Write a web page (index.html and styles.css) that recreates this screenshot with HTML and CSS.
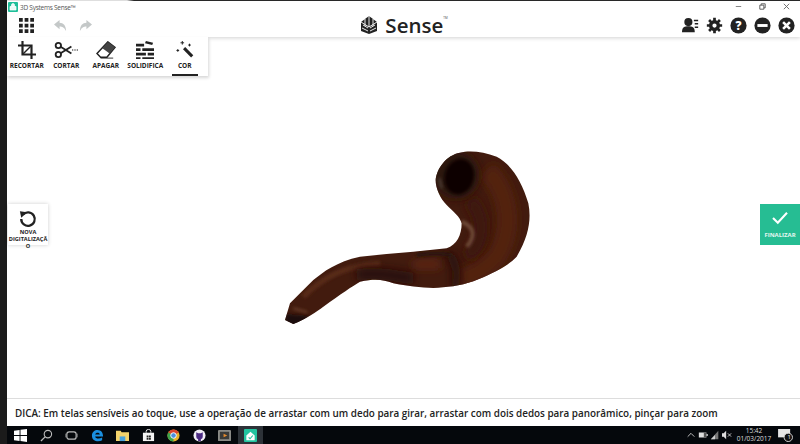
FILE: index.html
```html
<!DOCTYPE html>
<html lang="pt-BR">
<head>
    <meta charset="UTF-8">
    <meta name="viewport" content="width=device-width, initial-scale=1.0">
    <title>3D Systems Sense</title>
    <link rel="stylesheet" href="styles.css">
</head>
<body>
    <div class="desktop">
        <div class="topEdge"></div>
        <div class="window">
            <header class="header">
                <div class="titleBar">
                    <div class="appTitle">
                        <svg class="appIcon" viewBox="0 0 10 10"><rect width="10" height="10" rx="1" fill="#1fbf9a"/><path d="M2 4.500h6V8H2zM3.500 4.500V3a1.500 1.500 0 0 1 3 0v1.500" fill="#fff" stroke="#fff" stroke-width=".7" fill-opacity=".9"/></svg>
                        <span>3D Systems Sense™</span>
                    </div>
                    <div class="winControls">
                        <span class="winBtn">
                            <svg viewBox="0 0 10 10"><path d="M2 5h6" stroke="#777" stroke-width="1"/></svg>
                        </span>
                        <span class="winBtn">
                            <svg viewBox="0 0 10 10"><path d="M2 3.500h4.500V8H2zM3.500 3.500V2H8v4.500H6.500" fill="none" stroke="#555" stroke-width="1"/></svg>
                        </span>
                        <span class="winBtn">
                            <svg viewBox="0 0 10 10"><path d="M2 2l6 6M8 2l-6 6" stroke="#666" stroke-width="1"/></svg>
                        </span>
                    </div>
                </div>
                <div class="headerRow">
                    <div class="toolTop">
                        <svg class="gridIcon" viewBox="0 0 16 16">
                            <path d="M0 0h4v4H0zM6 0h4v4H6zM12 0h4v4h-4zM0 6h4v4H0zM6 6h4v4H6zM12 6h4v4h-4zM0 12h4v4H0zM6 12h4v4H6zM12 12h4v4h-4z" fill="#222"/>
                        </svg>
                        <svg class="undoIcon" viewBox="0 0 16 14"><path d="M7 1L1 6l6 5V8c3 0 5 1 7 5 0-6-3-9-7-9z" fill="#c4c8c8"/></svg>
                        <svg class="undoIcon" viewBox="0 0 16 14"><path d="M9 1l6 5-6 5V8c-3 0-5 1-7 5 0-6 3-9 7-9z" fill="#c4c8c8"/></svg>
                    </div>
                    <div class="brand">
                        <svg class="brandIcon" viewBox="0 0 20 20">
                            <path d="M10 1L18 7V16L10 19L2 16V7Z" fill="#222"/>
                            <path d="M10 1V12M2 7L10 12L18 7M4 10L9 13M16 10L11 13M3 13L9 16M17 13L11 16M6 4L6 11M14 4L14 11" stroke="#fff" stroke-width=".9" fill="none"/>
                        </svg>
                        <span class="brandName">Sense</span><span class="brandTm">TM</span>
                    </div>
                    <div class="headerIcons">
                        <svg class="headIcon" viewBox="0 0 20 20"><circle cx="7.500" cy="6" r="4.800" fill="#222"/><path d="M0 18c0-6 3-7 7.500-7s7.500 1 7.500 7z" fill="#222"/><path d="M14 4h5M15 8h4M15 12h4" stroke="#222" stroke-width="1.800"/></svg>
                        <svg class="headIcon" viewBox="0 0 20 20"><circle cx="10" cy="10" r="4.500" fill="none" stroke="#222" stroke-width="4"/><path d="M10 1v4M10 15v4M1 10h4M15 10h4M3.600 3.600l3 3M13.400 13.400l3 3M16.400 3.600l-3 3M6.600 13.400l-3 3" stroke="#222" stroke-width="3.200"/></svg>
                        <svg class="headIcon" viewBox="0 0 20 20"><circle cx="10" cy="10" r="9.500" fill="#222"/><text x="10" y="15" class="helpMark">?</text></svg>
                        <svg class="headIcon" viewBox="0 0 20 20"><circle cx="10" cy="10" r="9.500" fill="#222"/><rect x="4" y="8.300" width="12" height="3.400" fill="#fff"/></svg>
                        <svg class="headIcon" viewBox="0 0 20 20"><circle cx="10" cy="10" r="9.500" fill="#222"/><path d="M6 6l8 8M14 6l-8 8" stroke="#fff" stroke-width="3"/></svg>
                    </div>
                </div>
            </header>

            <main class="stage">
                <div class="toolPanel">
                    <div class="toolRow">
                        <div class="tool">
                            <svg class="toolIcon" viewBox="0 0 20 20"><path d="M5 0v15h15M0 5h15v15" fill="none" stroke="#222" stroke-width="2.400"/><path d="M5 15L15 5" stroke="#222" stroke-width="1.600"/></svg>
                            <span>RECORTAR</span>
                        </div>
                        <div class="tool">
                            <svg class="toolIcon toolWide" viewBox="0 0 26 20"><circle cx="4.500" cy="5" r="3" fill="none" stroke="#222" stroke-width="2"/><circle cx="4.500" cy="15" r="3" fill="none" stroke="#222" stroke-width="2"/><path d="M7 6.500L19 14M7 13.500L19 6" stroke="#222" stroke-width="2"/><path d="M20 10h1M22.500 10h1M25 10h1" stroke="#222" stroke-width="1.400"/></svg>
                            <span>CORTAR</span>
                        </div>
                        <div class="tool">
                            <svg class="toolIcon toolWide" viewBox="0 0 24 20"><path d="M14 1l8 6-9 11H6L2 14z" fill="#fff" stroke="#222" stroke-width="1.600"/><path d="M14 1l8 6-6 7-8-6z" fill="#444"/><path d="M6 19h14" stroke="#222" stroke-width="1"/></svg>
                            <span>APAGAR</span>
                        </div>
                        <div class="tool">
                            <svg class="toolIcon" viewBox="0 0 20 20"><path d="M0 3h9v3H0zM11 0l8 2-1 2.500-8-2zM0 8h5v3H0zM7 8h13v3H7zM0 13h11v3H0zM13 13h7v3h-7zM0 18h5v2H0zM7 18h13v2H7z" fill="#222"/></svg>
                            <span>SOLIDIFICA</span>
                        </div>
                        <div class="tool toolActive">
                            <svg class="toolIcon" viewBox="0 0 20 20"><path d="M9 8l9 9" stroke="#222" stroke-width="3.400"/><path d="M7 0v4M5 2h4M15 3v3M13.500 4.500h3M2 9v3M.5 10.500h3" stroke="#222" stroke-width="1.100"/></svg>
                            <span>COR</span>
                        </div>
                    </div>
                </div>

                <svg class="pipe" viewBox="0 0 810 585">
                    <defs>
                        <clipPath id="pipeClip">
                            <path d="M45 540L60 490L130 420C160 395 200 365 270 350L350 342L430 335L530 325C560 315 575 285 575 250C570 230 550 215 530 195C510 175 497 145 497 120C500 85 530 45 570 38C600 30 640 35 680 50C720 70 755 120 775 190C785 240 775 290 740 350C715 375 690 390 640 412C600 430 560 440 520 442C480 447 420 440 370 430C340 420 320 415 270 425C245 440 215 460 160 500C140 515 110 535 70 552Z"/>
                        </clipPath>
                        <filter id="soft" filterUnits="userSpaceOnUse" x="0" y="0" width="810" height="585"><feGaussianBlur stdDeviation="12"/></filter>
                        <filter id="softer" filterUnits="userSpaceOnUse" x="0" y="0" width="810" height="585"><feGaussianBlur stdDeviation="4"/></filter>
                    </defs>
                    <path d="M45 540L60 490L130 420C160 395 200 365 270 350L350 342L430 335L530 325C560 315 575 285 575 250C570 230 550 215 530 195C510 175 497 145 497 120C500 85 530 45 570 38C600 30 640 35 680 50C720 70 755 120 775 190C785 240 775 290 740 350C715 375 690 390 640 412C600 430 560 440 520 442C480 447 420 440 370 430C340 420 320 415 270 425C245 440 215 460 160 500C140 515 110 535 70 552Z" fill="#421b0e"/>
                    <g clip-path="url(#pipeClip)">
                        <path d="M650 90C720 160 730 270 680 350C650 385 610 405 570 420" fill="none" stroke="#522310" stroke-width="60" filter="url(#soft)"/>
                        <path d="M600 180C650 240 640 310 590 350" fill="none" stroke="#3e190c" stroke-width="40" filter="url(#soft)"/>
                        <path d="M100 470C160 410 230 375 330 370" fill="none" stroke="#592a17" stroke-width="16" filter="url(#softer)"/>
                        <path d="M260 405C330 395 380 410 430 415" fill="none" stroke="#28110a" stroke-width="34" filter="url(#soft)"/>
                        <path d="M430 375C460 370 480 375 510 372" fill="none" stroke="#5e2712" stroke-width="26" filter="url(#soft)"/>
                        <path d="M535 340C560 370 565 400 555 440" fill="none" stroke="#26100a" stroke-width="24" filter="url(#soft)"/>
                        <path d="M440 345C480 340 520 340 545 345" fill="none" stroke="#2a130b" stroke-width="12" filter="url(#softer)"/>
                        <path d="M575 245C610 260 620 285 590 320" fill="none" stroke="#6e4a38" stroke-width="12" filter="url(#softer)"/>
                        <path d="M48 522L115 528L110 556L45 560Z" fill="#1a100e" filter="url(#softer)"/>
                        <path d="M70 505L112 517" stroke="#6a3f2a" stroke-width="6" filter="url(#softer)"/>
                        <ellipse cx="558" cy="105" rx="70" ry="72" fill="#2b130b" filter="url(#soft)"/>
                        <ellipse cx="568" cy="110" rx="44" ry="54" transform="rotate(15 568 110)" fill="#0e0605" filter="url(#softer)"/>
                        <path d="M508 115L515 145" stroke="#4f433c" stroke-width="6" filter="url(#softer)"/>
                    </g>
                </svg>

                <div class="sideBtn newScan">
                    <svg class="newScanIcon" viewBox="0 0 20 20"><path d="M4.500 5A7.500 7.500 0 1 1 2.500 10" fill="none" stroke="#222" stroke-width="2.600"/><path d="M1 1.500L9 2.500L2.500 8.500Z" fill="#222"/></svg>
                    <span>NOVA DIGITALIZAÇÃO</span>
                </div>
                <div class="sideBtn finish">
                    <svg class="finishIcon" viewBox="0 0 20 16"><path d="M2 8l5.500 5.500L18 2" fill="none" stroke="#fff" stroke-width="2.400"/></svg>
                    <span>FINALIZAR</span>
                </div>
            </main>

            <footer class="tipBar">DICA: Em telas sensíveis ao toque, use a operação de arrastar com um dedo para girar, arrastar com dois dedos para panorâmico, pinçar para zoom</footer>
        </div>
    </div>

    <div class="taskbar">
        <div class="taskIcons">
            <span class="taskItem"><svg viewBox="0 0 14 14"><path d="M0 2l6-1v5.500H0zM7 .9L14 0v6.500H7zM0 7.500h6V13l-6-1zM7 7.500h7V14l-7-1z" fill="#fff"/></svg></span>
            <span class="taskItem"><svg viewBox="0 0 14 14"><circle cx="8.500" cy="5.500" r="4" fill="none" stroke="#bbb" stroke-width="1.200"/><path d="M5.500 8.500L1 13" stroke="#bbb" stroke-width="1.400"/></svg></span>
            <span class="taskItem"><svg viewBox="0 0 14 14"><rect x="2" y="3" width="10" height="8" rx="2.500" fill="none" stroke="#bbb" stroke-width="1.300"/><path d="M0 5v4M14 5v4" stroke="#bbb" stroke-width="1"/></svg></span>
            <span class="taskItem"><svg viewBox="0 0 14 14"><path d="M1 7c0-4 3-6 6-6 4 0 6 3 6 7H4.500c.3 2.600 4.500 3 7.500 1.200v3C8 14.500 1 13.500 1 7zM4.500 5.800h5C9.300 3.500 5 3.500 4.500 5.800z" fill="#1a8fe0"/></svg></span>
            <span class="taskItem"><svg viewBox="0 0 14 14"><path d="M0 2h5l1 1.500h8V13H0z" fill="#f3d36b"/><path d="M4 8h6v5H4z" fill="#4aa3dd"/></svg></span>
            <span class="taskItem"><svg viewBox="0 0 14 14"><path d="M1 4h12v9H1z" fill="#f4f4f4"/><path d="M4.500 4V2.500a2.500 2 0 0 1 5 0V4" fill="none" stroke="#f4f4f4"/><path d="M5 7h2v2H5zM7.500 7h2v2h-2zM5 9.500h2v2H5zM7.500 9.500h2v2h-2z" fill="#222"/></svg></span>
            <span class="taskItem"><svg viewBox="0 0 14 14"><circle cx="7" cy="7" r="6.500" fill="#e5b22a"/><path d="M7 7L1.400 3.700A6.500 6.500 0 0 1 12.600 3.700z" fill="#d8432f"/><path d="M7 7L7 13.500A6.500 6.500 0 0 1 1.400 3.700z" fill="#3da24c"/><circle cx="7" cy="7" r="3" fill="#4a8fe0" stroke="#fff"/></svg></span>
            <span class="taskItem"><svg viewBox="0 0 14 14"><circle cx="7" cy="7" r="6.500" fill="#f1eef6"/><path d="M3.500 3.500l2 1h3l2-1V8a3.500 3 0 0 1-2 3v2H5.500v-2a3.500 3 0 0 1-2-3z" fill="#4b2b83"/></svg></span>
            <span class="taskItem"><svg viewBox="0 0 14 14"><rect y="1" width="14" height="12" rx="1" fill="#8a8a86"/><rect x="2" y="3" width="10" height="8" fill="#3a3a38"/><path d="M6 5l4 2-4 2z" fill="#e58a2c"/></svg></span>
            <span class="taskItem taskActive"><svg viewBox="0 0 14 14"><rect width="14" height="14" rx="1" fill="#23c4a0"/><path d="M2.500 7L7 3l4.500 4v5h-9z" fill="#fff"/><path d="M5 9l1.500 1.500L9.500 7" fill="none" stroke="#23c4a0" stroke-width="1.200"/></svg></span>
        </div>
        <div class="tray">
            <svg class="trayIcon" viewBox="0 0 12 12"><path d="M2 8l4-4 4 4" fill="none" stroke="#ddd" stroke-width="1"/></svg>
            <svg class="trayIcon" viewBox="0 0 12 12"><path d="M1 3h9v6H1z" fill="#ddd"/><path d="M7 3h3v6H7z" fill="#555"/><path d="M10 5h2v2h-2z" fill="#ddd"/></svg>
            <svg class="trayIcon" viewBox="0 0 12 12"><path d="M1 11L10 1v10z" fill="#777"/><path d="M1 11l5-5v5z" fill="#ccc"/></svg>
            <svg class="trayIcon" viewBox="0 0 12 12"><path d="M0 4h2l3-3v10L2 8H0z" fill="#ddd"/><path d="M7 4l4 4M11 4l-4 4" stroke="#ddd" stroke-width="1"/></svg>
            <div class="clock">
                <span>15:42</span>
                <span>01/03/2017</span>
            </div>
            <div class="notify">
                <svg viewBox="0 0 16 14"><path d="M0 0h13v9H0z" fill="#e6e6e6"/><circle cx="11" cy="9" r="4.500" fill="#111" stroke="#ddd"/></svg>
                <span class="notifyCount">1</span>
            </div>
        </div>
    </div>
</body>
</html>
```

FILE: styles.css
```css
* {
    box-sizing: border-box;
}
html, body {
    margin: 0;
    height: 100%;
}
body {
    display: flex;
    flex-direction: column;
    width: 800px;
    height: 444px;
    overflow: hidden;
    background-color: #1b1b1b;
    font-family: 'Open Sans', sans-serif;
    color: #222;
}
.desktop {
    flex: 1;
    min-height: 0;
    display: flex;
    flex-direction: column;
    padding-left: 7px;
}
.topEdge {
    height: 1px;
    background: linear-gradient(to right, #e8e8e8 120px, #2a2a2a 127px);
}
.window {
    flex: 1;
    min-height: 0;
    display: flex;
    flex-direction: column;
    background-color: #fff;
}

/* Cabecera */
.header {
    height: 36px;
    position: relative;
    z-index: 2;
    background-color: #fff;
    box-shadow: 0 1px 4px rgba(0, 0, 0, 0.18);
}
.titleBar {
    height: 12px;
    display: flex;
    justify-content: space-between;
    align-items: center;
}
.appTitle {
    display: flex;
    align-items: center;
    gap: 2px;
    padding-left: 1px;
    font-size: 6.500px;
    letter-spacing: -0.25px;
    color: #555;
}
.appIcon {
    width: 10px;
    height: 10px;
}
.winControls {
    display: flex;
    padding-right: 2px;
}
.winBtn {
    width: 24px;
    height: 10px;
    display: flex;
    justify-content: center;
}
.winBtn svg {
    width: 9px;
    height: 9px;
}
.headerRow {
    height: 24px;
    display: grid;
    grid-template-columns: 1fr auto 1fr;
    align-items: center;
    padding: 0 5px;
}
.toolTop {
    display: flex;
    align-items: center;
    padding-left: 7px;
}
.gridIcon {
    width: 15px;
    height: 15px;
    margin-right: 19px;
}
.undoIcon {
    width: 15px;
    height: 13px;
    margin-right: 10px;
}
.brand {
    display: flex;
    align-items: center;
    height: 24px;
}
.brandIcon {
    width: 20px;
    height: 20px;
    margin-right: 6px;
}
.brandName {
    font-size: 20.500px;
    line-height: 24px;
    font-weight: 600;
    color: #222;
}
.brandTm {
    align-self: flex-start;
    margin-top: 3px;
    font-size: 3px;
    color: #444;
}
.headerIcons {
    display: flex;
    gap: 7px;
    justify-self: end;
}
.headIcon {
    width: 17px;
    height: 17px;
}
.helpMark {
    font-family: 'Open Sans', sans-serif;
    font-size: 14px;
    font-weight: 800;
    fill: #fff;
    text-anchor: middle;
}

/* Zona de trabajo */
.stage {
    flex: 1;
    min-height: 0;
    position: relative;
    display: flex;
    justify-content: space-between;
    align-items: center;
    padding: 14px 0 0 1px;
    background-color: #fff;
}
.toolPanel {
    position: absolute;
    z-index: 3;
    top: 0;
    left: 0;
    width: 201px;
    height: 39px;
    background-color: #fff;
    box-shadow: 1px 2px 3px rgba(0, 0, 0, 0.16);
}
.toolRow {
    display: flex;
    padding-top: 4px;
}
.tool {
    width: 39.500px;
    height: 35px;
    display: flex;
    flex-direction: column;
    align-items: center;
    font-size: 6.500px;
    font-weight: 700;
    line-height: 10px;
    white-space: nowrap;
}
.toolIcon {
    width: 18px;
    height: 18px;
    margin-bottom: 2px;
}
.toolWide {
    width: 24px;
}
.toolActive {
    position: relative;
}
.toolActive::after {
    content: "";
    position: absolute;
    left: 7px;
    right: 7px;
    bottom: 0;
    height: 2px;
    background-color: #222;
}
.pipe {
    position: absolute;
    left: 263px;
    top: 103px;
    width: 270px;
    height: 195px;
}
.sideBtn {
    width: 40px;
    height: 41px;
    display: flex;
    flex-direction: column;
    align-items: center;
    text-align: center;
    font-size: 6px;
    font-weight: 700;
    line-height: 7px;
}
.newScan {
    background-color: #fff;
    box-shadow: 0 0 4px rgba(0, 0, 0, 0.2);
    padding-top: 6px;
    font-size: 5.600px;
    overflow-wrap: anywhere;
}
.newScanIcon {
    width: 18px;
    height: 18px;
    margin-bottom: 1px;
    flex-shrink: 0;
}
.finish {
    background-color: #26bd93;
    color: #e4f7f1;
    padding-top: 7px;
}
.finishIcon {
    width: 18px;
    height: 14px;
    margin-bottom: 7px;
}
.tipBar {
    height: 28px;
    display: flex;
    align-items: center;
    padding-left: 8px;
    border-top: 1px solid #ddd;
    background-color: #fff;
    font-size: 9.900px;
    font-weight: 600;
    color: #222;
    white-space: nowrap;
}

/* Barra de tareas */
.taskbar {
    height: 18px;
    margin-left: 7px;
    display: flex;
    justify-content: space-between;
    background-color: #05080c;
}
.taskIcons {
    display: flex;
    padding-left: 1px;
}
.taskItem {
    width: 25.500px;
    display: flex;
    align-items: center;
    justify-content: center;
}
.taskItem svg {
    width: 13px;
    height: 13px;
}
.taskActive {
    background-color: #2d3238;
}
.tray {
    display: flex;
    align-items: center;
    gap: 2px;
    color: #ddd;
}
.trayIcon {
    width: 10px;
    height: 10px;
}
.clock {
    width: 40px;
    display: flex;
    flex-direction: column;
    align-items: center;
    font-size: 6.500px;
    line-height: 8px;
}
.notify {
    position: relative;
    width: 24px;
    padding-right: 6px;
    display: flex;
    justify-content: center;
}
.notify svg {
    width: 15px;
    height: 13px;
}
.notifyCount {
    position: absolute;
    left: 11.500px;
    top: 4px;
    font-size: 6px;
    line-height: 8px;
    color: #eee;
}
```
